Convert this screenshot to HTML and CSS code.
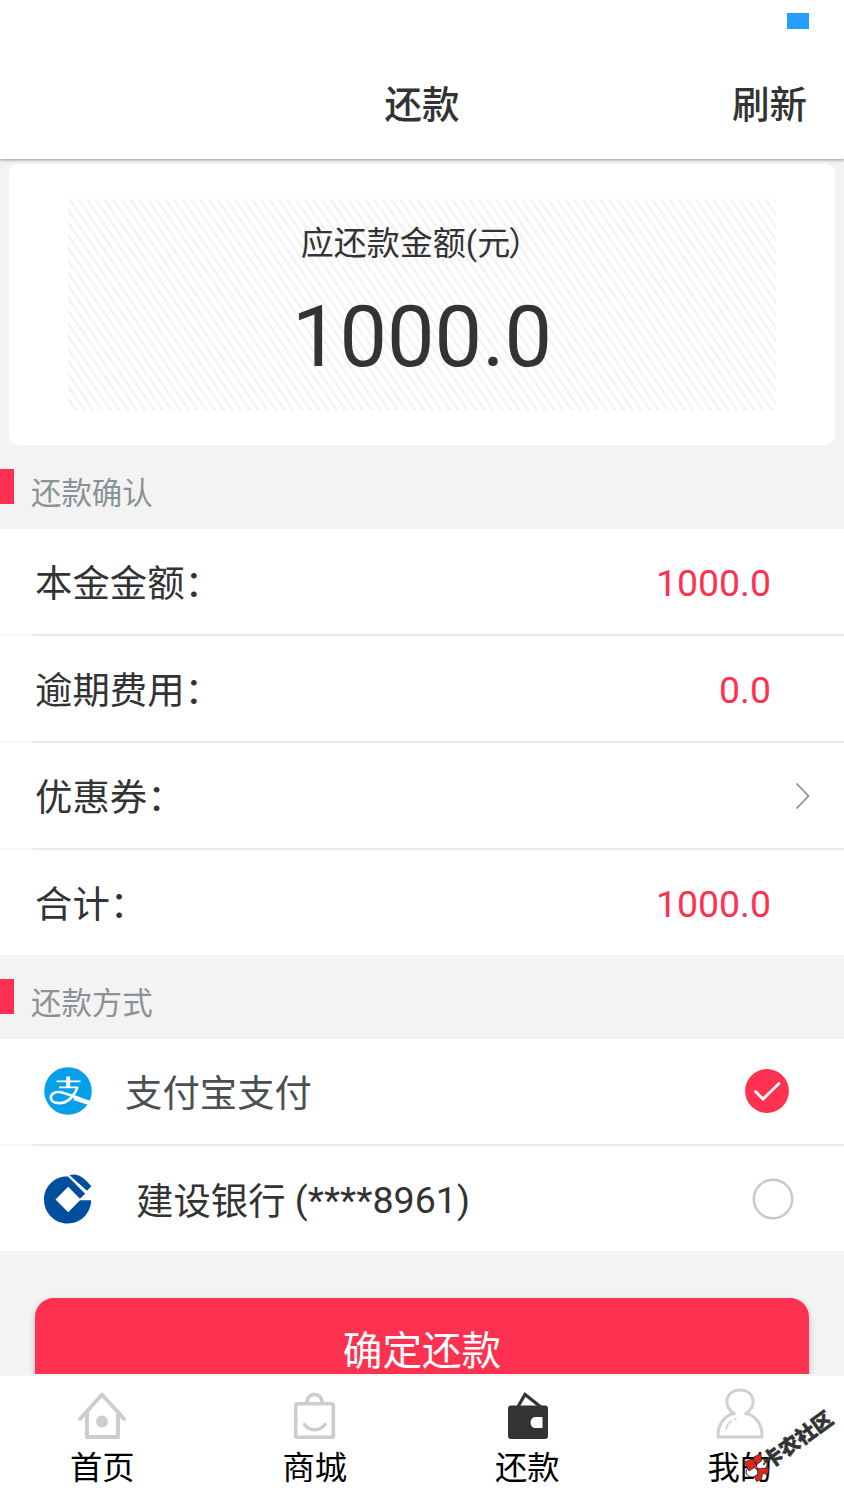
FILE: index.html
```html
<!DOCTYPE html>
<html lang="zh-CN">
<head>
<meta charset="utf-8">
<title>还款</title>
<link rel="stylesheet" href="styles.css">
</head>
<body>
<div class="app">
  <div class="status"><span class="status-mark"></span></div>
  <header class="header">
    <span></span>
    <h1 class="title">还款</h1>
    <a class="refresh">刷新</a>
  </header>

  <main class="content">
    <section class="card">
      <div class="amount">
        <svg class="stripes" width="708" height="211">
          <defs>
            <pattern id="hatch" x="1.3" width="8.7" height="12.6" patternUnits="userSpaceOnUse">
              <path d="M-8.7 -12.6L17.4 25.2M-8.7 0L8.7 25.2M0 -12.6L17.4 12.6" stroke="#f2f2f2" stroke-width="2.4"/>
            </pattern>
          </defs>
          <rect width="708" height="211" fill="url(#hatch)"/>
        </svg>
        <p class="amount-label">应还款金额(元<span class="paren">）</span></p>
        <p class="amount-value">1000.0</p>
      </div>
    </section>

    <h2 class="section-title">还款确认</h2>
    <ul class="rows">
      <li class="row"><span class="label">本金金额<span class="colon">：</span></span><span class="num">1000.0</span></li>
      <li class="row"><span class="label">逾期费用<span class="colon">：</span></span><span class="num">0.0</span></li>
      <li class="row"><span class="label">优惠券<span class="colon">：</span></span>
        <svg class="chevron" width="16" height="28" viewBox="0 0 16 28"><path d="M1.5 1.5L13.5 14L1.5 26.5" fill="none" stroke="#8a9092" stroke-width="1.8"/></svg>
      </li>
      <li class="row"><span class="label">合计<span class="colon">：</span></span><span class="num">1000.0</span></li>
    </ul>

    <h2 class="section-title">还款方式</h2>
    <ul class="rows">
      <li class="row pay alipay">
        <svg class="logo" width="48" height="48" viewBox="0 0 48 48">
          <defs><clipPath id="disc"><circle cx="24" cy="24" r="23.8"/></clipPath></defs>
          <circle cx="24" cy="24" r="23.8" fill="#069fea"/>
          <g clip-path="url(#disc)" fill="none" stroke="#fff">
            <path d="M12.5 14.3H36.5M15 20.3H34" stroke-width="1.8"/>
            <path d="M24.2 9.5V20" stroke-width="4"/>
            <path d="M33.5 20C31.5 27 25 36.2 15 36.2C9.5 36.2 6.8 33.5 6.8 30.5C6.8 27.5 9.8 25 14.5 25C21 25 31 30.5 48 36" stroke-width="2.7"/>
            <path d="M30 31L48 37" stroke-width="4.2"/>
          </g>
        </svg>
        <span class="name">支付宝支付</span>
        <svg width="44" height="44" viewBox="0 0 44 44"><circle cx="22" cy="22" r="21.9" fill="#ff3150"/><path d="M10.5 22.5L18 30L34 14.5" fill="none" stroke="#fff" stroke-width="2.8" stroke-linecap="round"/></svg>
      </li>
      <li class="row pay bank">
        <svg class="logo" width="48" height="50" viewBox="0 0 48 50">
          <path d="M21 2.5C9 3.5 0 13.5 0 25.5C0 39 10.5 49.5 24 49.5C36.5 49.5 46.5 40 47.2 26.3H36L24.2 38.2L11.5 25.5L24.2 12.8L36 24.8L41.2 19.7L24 2.5Z" fill="#004f9f"/>
          <path d="M25.5 1.2C33-.8 38 1.5 47.3 12.3L43 16.8L27 2.5Z" fill="#004f9f"/>
        </svg>
        <span class="name">建设银行 <span class="digits">(****8961)</span></span>
        <svg width="42" height="42" viewBox="0 0 42 42"><circle cx="21" cy="21" r="19.2" fill="none" stroke="#c9c9c9" stroke-width="2.4"/></svg>
      </li>
    </ul>

    <button class="submit">确定还款</button>
  </main>

  <nav class="tabs">
    <a class="tab">
      <svg width="50" height="54" viewBox="0 0 50 54" fill="none" stroke="#cdcdcd" stroke-width="4" stroke-linecap="round" stroke-linejoin="round"><path d="M3 31L25 6.5L47 31M10 24V49H41V24"/><circle cx="25" cy="33.5" r="6" fill="#cdcdcd" stroke="none"/></svg>
      <span>首页</span>
    </a>
    <a class="tab">
      <svg width="50" height="54" viewBox="0 0 50 54" fill="none" stroke="#cdcdcd" stroke-width="3.6" stroke-linecap="round"><rect x="5.7" y="15.8" width="37.6" height="33.4" rx="1.5"/><path d="M17 15C17 3.5 32 3.5 32 15M14.5 36.5C20 43.5 29.5 43.5 35 36.5"/></svg>
      <span>商城</span>
    </a>
    <a class="tab">
      <svg width="50" height="54" viewBox="0 0 50 54"><path d="M15.5 19.5L23 6.5L39.5 19.5" fill="none" stroke="#333" stroke-width="3.2"/><path d="M9 17.5H43Q46 17.5 46 20.5V48Q46 51 43 51H9Q6 51 6 48V20.5Q6 17.5 9 17.5ZM40.5 29H33.5C27 29 27 40 33.5 40H40.5Z" fill="#333" fill-rule="evenodd"/></svg>
      <span>还款</span>
    </a>
    <a class="tab">
      <svg width="50" height="54" viewBox="0 0 50 54" fill="none" stroke="#d0d0d0" stroke-width="3" stroke-linejoin="round" stroke-linecap="round"><path d="M19.5 25.5C7 19 10.5 2 25 2C39.5 2 43 19 30.5 25.5C41 27 47.5 37 47 49H3C2.5 37 9 27 19.5 25.5Z"/><path d="M11 41C12 37 14 34.5 16.5 33M19.5 31.5L21 31" stroke-width="1.6"/></svg>
      <span>我的</span>
    </a>
  </nav>

  <div class="watermark">
    <svg class="wm-logo" width="32" height="30" viewBox="0 0 32 30"><ellipse cx="20.5" cy="12.5" rx="5.5" ry="5.5" fill="#fff" stroke="#222"/><ellipse cx="11" cy="20" rx="6" ry="5" fill="#fff" stroke="#222"/><path d="M3 10L12 7L16 14L8 19ZM12.5 5L20 1.5L20.5 9L15.5 13ZM15 16.5L28 16L26.5 22.5L21.5 21.5L20.5 27.5L15.5 29.5L13.5 25L18 21.5Z" fill="#e1251b" stroke="#222" stroke-width=".7"/><circle cx="23" cy="12" r="1" fill="#222"/></svg>
    <span class="wm-text">卡农社区</span>
  </div>
</div>
</body>
</html>
```
FILE: styles.css
```css
* { box-sizing: border-box; }
body {
  margin: 0;
  background: #f3f3f3;
  color: #333;
  font-family: Roboto, "Noto Sans CJK SC", sans-serif;
}
h1, h2, p, ul { margin: 0; padding: 0; font-weight: 400; }
.app {
  position: relative;
  display: flex;
  flex-direction: column;
  width: 844px;
  height: 1500px;
  overflow: hidden;
}
.status {
  position: relative;
  z-index: 2;
  display: flex;
  justify-content: flex-end;
  height: 50px;
  padding: 13px 35px 0 0;
  background: #fff;
}
.status-mark { width: 22px; height: 16px; background: #259fff; }
.header {
  position: relative;
  z-index: 1;
  display: grid;
  grid-template-columns: 1fr auto 1fr;
  align-items: center;
  height: 109px;
  padding: 0 37px;
  background: #fff;
  box-shadow: 0 1px 3px rgba(0, 0, 0, .4);
}
.title, .refresh { font-size: 37.5px; line-height: 56px; font-weight: 500; }
.refresh { justify-self: end; }
.content { flex: 1; min-height: 0; overflow: hidden; padding-top: 5px; }
.card {
  height: 281px;
  margin: 0 9px;
  padding: 35px 59px;
  border-radius: 9px;
  background: #fff;
}
.amount { position: relative; height: 211px; text-align: center; }
.stripes { position: absolute; inset: 0; }
.amount-label {
  position: relative;
  padding-top: 21px;
  font-size: 33px;
  line-height: 48px;
}
.paren { margin-left: -2px; margin-right: 2px; }
.amount-value {
  position: relative;
  font-size: 84.6px;
  line-height: 100px;
  padding-top: 20px;
}
.section-title {
  display: flex;
  gap: 17px;
  height: 84px;
  padding-top: 24px;
  font-size: 30.4px;
  line-height: 50px;
  color: #8a9296;
}
.section-title::before { content: ""; width: 14px; height: 35px; background: #ff3150; }
.rows { list-style: none; background: #fff; }
.row {
  display: flex;
  align-items: center;
  justify-content: space-between;
  height: 107px;
  padding: 0 73px 0 35px;
  border-bottom: 2px solid;
  border-image: linear-gradient(90deg, #f6f6f6 35px, #e9e9e9 35px) 2;
  font-size: 37.4px;
}
.row:last-child { height: 105px; border-bottom: 0; }
.label { padding-bottom: 2px; }
.num { padding-top: 2px; color: #ff3150; }
.chevron { margin-right: -40px; }
.pay { padding-left: 44px; }
.name { flex: 1; }
.alipay { padding-right: 55px; padding-bottom: 1px; }
.alipay .name { margin-left: 33px; color: #4a4f52; }
.bank { padding-right: 50px; }
.bank .name { margin-left: 44px; }
.digits { font-size: 37.6px; vertical-align: 2px; line-height: 1; }
.submit {
  display: block;
  width: 774px;
  height: 107px;
  margin: 47px auto 0;
  padding: 1px 0 0;
  border: 0;
  border-radius: 19px;
  background: #ff3150;
  box-shadow: 0 3px 6px rgba(0, 0, 0, .25);
  color: #fff;
  font-family: inherit;
  font-size: 39.6px;
  line-height: 48px;
}
.tabs {
  display: flex;
  height: 126px;
  margin: 0 -2px 0 -4px;
  border-top: 2px solid #f5f4f4;
  background: #fff;
}
.tab {
  flex: 1;
  display: flex;
  flex-direction: column;
  align-items: center;
  padding-top: 12px;
  color: #000;
  font-size: 32.3px;
  line-height: 52px;
}
.watermark { position: absolute; left: 741px; top: 1452px; }
.wm-logo { display: block; }
.wm-text {
  position: absolute;
  left: 24px;
  top: 0;
  transform-origin: 0 50%;
  transform: rotate(-36deg);
  color: #333;
  font-size: 20.3px;
  line-height: 24px;
  font-weight: 900;
  -webkit-text-stroke: .5px #333;
  white-space: nowrap;
}
```
